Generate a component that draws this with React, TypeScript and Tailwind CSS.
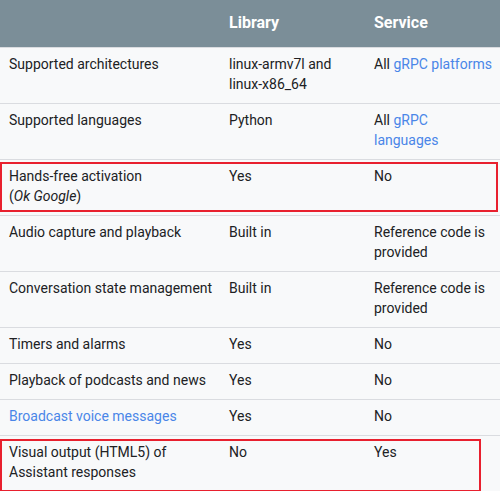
import React from "react";

type Cell = React.ReactNode;

const Link = ({ children }: { children: React.ReactNode }) => (
  <span className="text-[#4a86e8]">{children}</span>
);

const rows: { cells: Cell[]; box?: string }[] = [
  {
    cells: [
      "Supported architectures",
      <>linux-armv7l and<br />linux-x86_64</>,
      <>All <Link>gRPC platforms</Link></>,
    ],
  },
  {
    cells: ["Supported languages", "Python", <>All <Link>gRPC</Link><br /><Link>languages</Link></>],
  },
  {
    cells: [<>Hands-free activation<br />(<i>Ok Google</i>)</>, "Yes", "No"],
    box: "top-[2px] bottom-[3px] left-0 right-[2px]",
  },
  {
    cells: ["Audio capture and playback", "Built in", <>Reference code is<br />provided</>],
  },
  {
    cells: ["Conversation state management", "Built in", <>Reference code is<br />provided</>],
  },
  { cells: ["Timers and alarms", "Yes", "No"] },
  { cells: ["Playback of podcasts and news", "Yes", "No"] },
  { cells: [<Link>Broadcast voice messages</Link>, "Yes", "No"] },
  {
    cells: [<>Visual output (HTML5) of<br />Assistant responses</>, "No", "Yes"],
    box: "top-[3px] -bottom-[1px] left-0 right-[19px]",
  },
];

const App = () => {
  return (
    <div className="w-[500px] h-[491px] overflow-hidden bg-[#f8f9fa] font-['Roboto',sans-serif] text-[14px] leading-[20px] text-[#202124]">
      <div className="grid grid-cols-[220px_145px_1fr] h-[47px] items-center pb-[2px] bg-[#7b8e98] text-white font-bold text-[16px]">
        <div className="pl-[9px]"></div>
        <div className="pl-[9px]">Library</div>
        <div className="pl-[9px]">Service</div>
      </div>
      {rows.map((row, i) => (
        <div
          key={i}
          className="relative grid grid-cols-[220px_145px_1fr] border-t border-[#dadce0] pt-[6px] pb-[9px]"
        >
          {row.cells.map((c, j) => (
            <div key={j} className="pl-[9px] whitespace-nowrap">
              {c}
            </div>
          ))}
          {row.box && (
            <div className={`absolute border-2 border-[#e8202e] ${row.box}`}></div>
          )}
        </div>
      ))}
    </div>
  );
};

export default App;
